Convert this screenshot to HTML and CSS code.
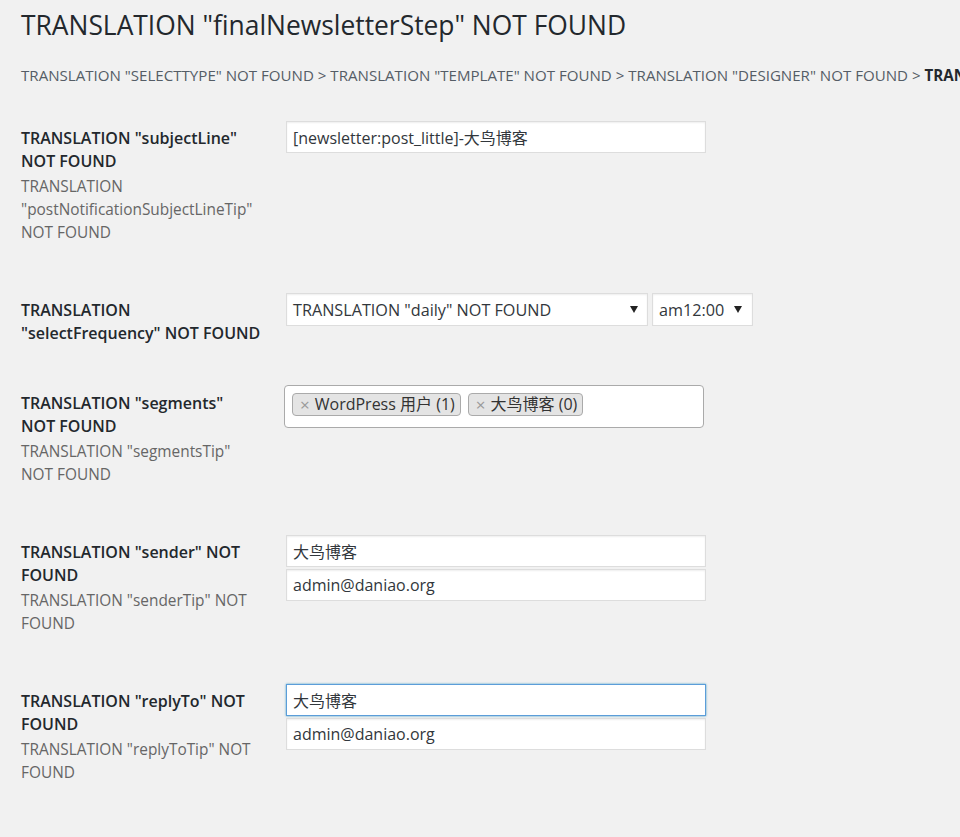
FILE: index.html
```html
<!DOCTYPE html>
<html lang="zh-CN">
<head>
<meta charset="utf-8">
<title>Newsletter</title>
<link rel="stylesheet" href="styles.css">
</head>
<body>
<div class="wrap">
  <h1 class="title">TRANSLATION "finalNewsletterStep" NOT FOUND</h1>
  <p class="crumbs">TRANSLATION "SELECTTYPE" NOT FOUND &gt; TRANSLATION "TEMPLATE" NOT FOUND &gt; TRANSLATION "DESIGNER" NOT FOUND &gt; <b>TRANSLATION "FINALNEWSLETTERSTEP" NOT FOUND</b></p>

  <div class="form">
    <div class="row row-subject">
      <div class="label">
        <div class="name">TRANSLATION "subjectLine"<br>NOT FOUND</div>
        <div class="tip">TRANSLATION<br>"postNotificationSubjectLineTip"<br>NOT FOUND</div>
      </div>
      <div class="field">
        <input class="text" type="text" value="[newsletter:post_little]-大鸟博客">
      </div>
    </div>

    <div class="row row-frequency">
      <div class="label">
        <div class="name">TRANSLATION<br>"selectFrequency" NOT FOUND</div>
      </div>
      <div class="field">
        <span class="select select-wide"><span class="select-text">TRANSLATION "daily" NOT FOUND</span><span class="arrow"></span></span><span class="select select-time"><span class="select-text">am12:00</span><span class="arrow"></span></span>
      </div>
    </div>

    <div class="row row-segments">
      <div class="label label-segments">
        <div class="name">TRANSLATION "segments"<br>NOT FOUND</div>
        <div class="tip">TRANSLATION "segmentsTip"<br>NOT FOUND</div>
      </div>
      <div class="field">
        <div class="multi">
          <span class="chip"><span class="chip-x">×</span>WordPress 用户 (1)</span>
          <span class="chip"><span class="chip-x">×</span>大鸟博客 (0)</span>
        </div>
      </div>
    </div>

    <div class="row row-sender">
      <div class="label">
        <div class="name">TRANSLATION "sender" NOT<br>FOUND</div>
        <div class="tip">TRANSLATION "senderTip" NOT<br>FOUND</div>
      </div>
      <div class="field">
        <input class="text" type="text" value="大鸟博客">
        <input class="text" type="text" value="admin@daniao.org">
      </div>
    </div>

    <div class="row row-reply">
      <div class="label">
        <div class="name">TRANSLATION "replyTo" NOT<br>FOUND</div>
        <div class="tip">TRANSLATION "replyToTip" NOT<br>FOUND</div>
      </div>
      <div class="field">
        <input class="text text-focus" type="text" value="大鸟博客">
        <input class="text" type="text" value="admin@daniao.org">
      </div>
    </div>
  </div>
</div>
</body>
</html>
```
FILE: styles.css
```css
html, body {
  margin: 0;
  padding: 0;
  background: #f1f1f1;
  overflow: hidden;
}
body {
  font-family: "Open Sans", "Noto Sans CJK SC", sans-serif;
  color: #23282d;
}
.wrap {
  padding: 0 0 0 21px;
}
.title {
  margin: 8px 0 0;
  font-size: 26.4px;
  line-height: 34px;
  font-weight: 400;
  color: #23282d;
  white-space: nowrap;
}
.crumbs {
  margin: 23px 0 0;
  font-size: 15.1px;
  line-height: 20px;
  color: #555d66;
  white-space: nowrap;
}
.crumbs b {
  font-weight: 700;
  color: #23282d;
}
.form {
  margin-top: 36px;
}
.row {
  display: flex;
  align-items: flex-start;
}
.row-frequency { margin-top: 49px; }
.row-segments { margin-top: 40px; }
.row-sender { margin-top: 49px; }
.row-reply { margin-top: 48.5px; }
.label {
  width: 265px;
  flex: none;
  padding-top: 6px;
}
.label-segments {
  padding-top: 7.3px;
}
.name {
  font-size: 16px;
  line-height: 23px;
  font-weight: 600;
  color: #23282d;
  white-space: nowrap;
}
.tip {
  margin-top: 2px;
  font-size: 15.4px;
  line-height: 23px;
  color: #666;
  white-space: nowrap;
}
.field {
  width: 470px;
}
.text {
  display: block;
  box-sizing: border-box;
  width: 420px;
  height: 32px;
  margin: 0 0 2px;
  padding: 0 6px;
  border: 1px solid #ddd;
  border-radius: 0;
  background: #fff;
  box-shadow: inset 0 1px 2px rgba(0, 0, 0, 0.07);
  font-family: "Open Sans", "Noto Sans CJK SC", sans-serif;
  font-size: 16px;
  color: #32373c;
  outline: none;
}
.text-focus {
  border-color: #5b9dd9;
  box-shadow: 0 0 2px rgba(30, 140, 190, 0.8);
}
.select {
  position: relative;
  display: inline-flex;
  align-items: center;
  box-sizing: border-box;
  height: 33px;
  padding: 0 6px;
  border: 1px solid #ddd;
  background: #fff;
  box-shadow: inset 0 1px 2px rgba(0, 0, 0, 0.07);
  font-size: 16.2px;
  color: #32373c;
  vertical-align: top;
  white-space: nowrap;
}
.select-wide {
  width: 362px;
}
.select-time {
  width: 101px;
  margin-left: 4px;
}
.select-text {
  flex: 1;
}
.arrow {
  position: absolute;
  top: 12px;
  right: 9px;
  width: 0;
  height: 0;
  border-left: 4px solid transparent;
  border-right: 4px solid transparent;
  border-top: 7px solid #222;
}
.select-time .arrow {
  right: 10px;
}
.multi {
  box-sizing: border-box;
  width: 420px;
  height: 43px;
  margin-left: -2px;
  padding: 7px 7px 0;
  border: 1px solid #aaa;
  border-radius: 4px;
  background: #fff;
  display: flex;
  align-items: flex-start;
  gap: 7px;
}
.chip {
  display: inline-flex;
  align-items: center;
  box-sizing: border-box;
  height: 23px;
  padding: 0 5px 0 7px;
  border: 1px solid #aaa;
  border-radius: 4px;
  background: #e4e4e4;
  font-size: 16px;
  line-height: 21px;
  color: #333;
  white-space: nowrap;
}
.chip-x {
  margin-right: 5px;
  color: #999;
  font-weight: 400;
  font-size: 17px;
}
```
